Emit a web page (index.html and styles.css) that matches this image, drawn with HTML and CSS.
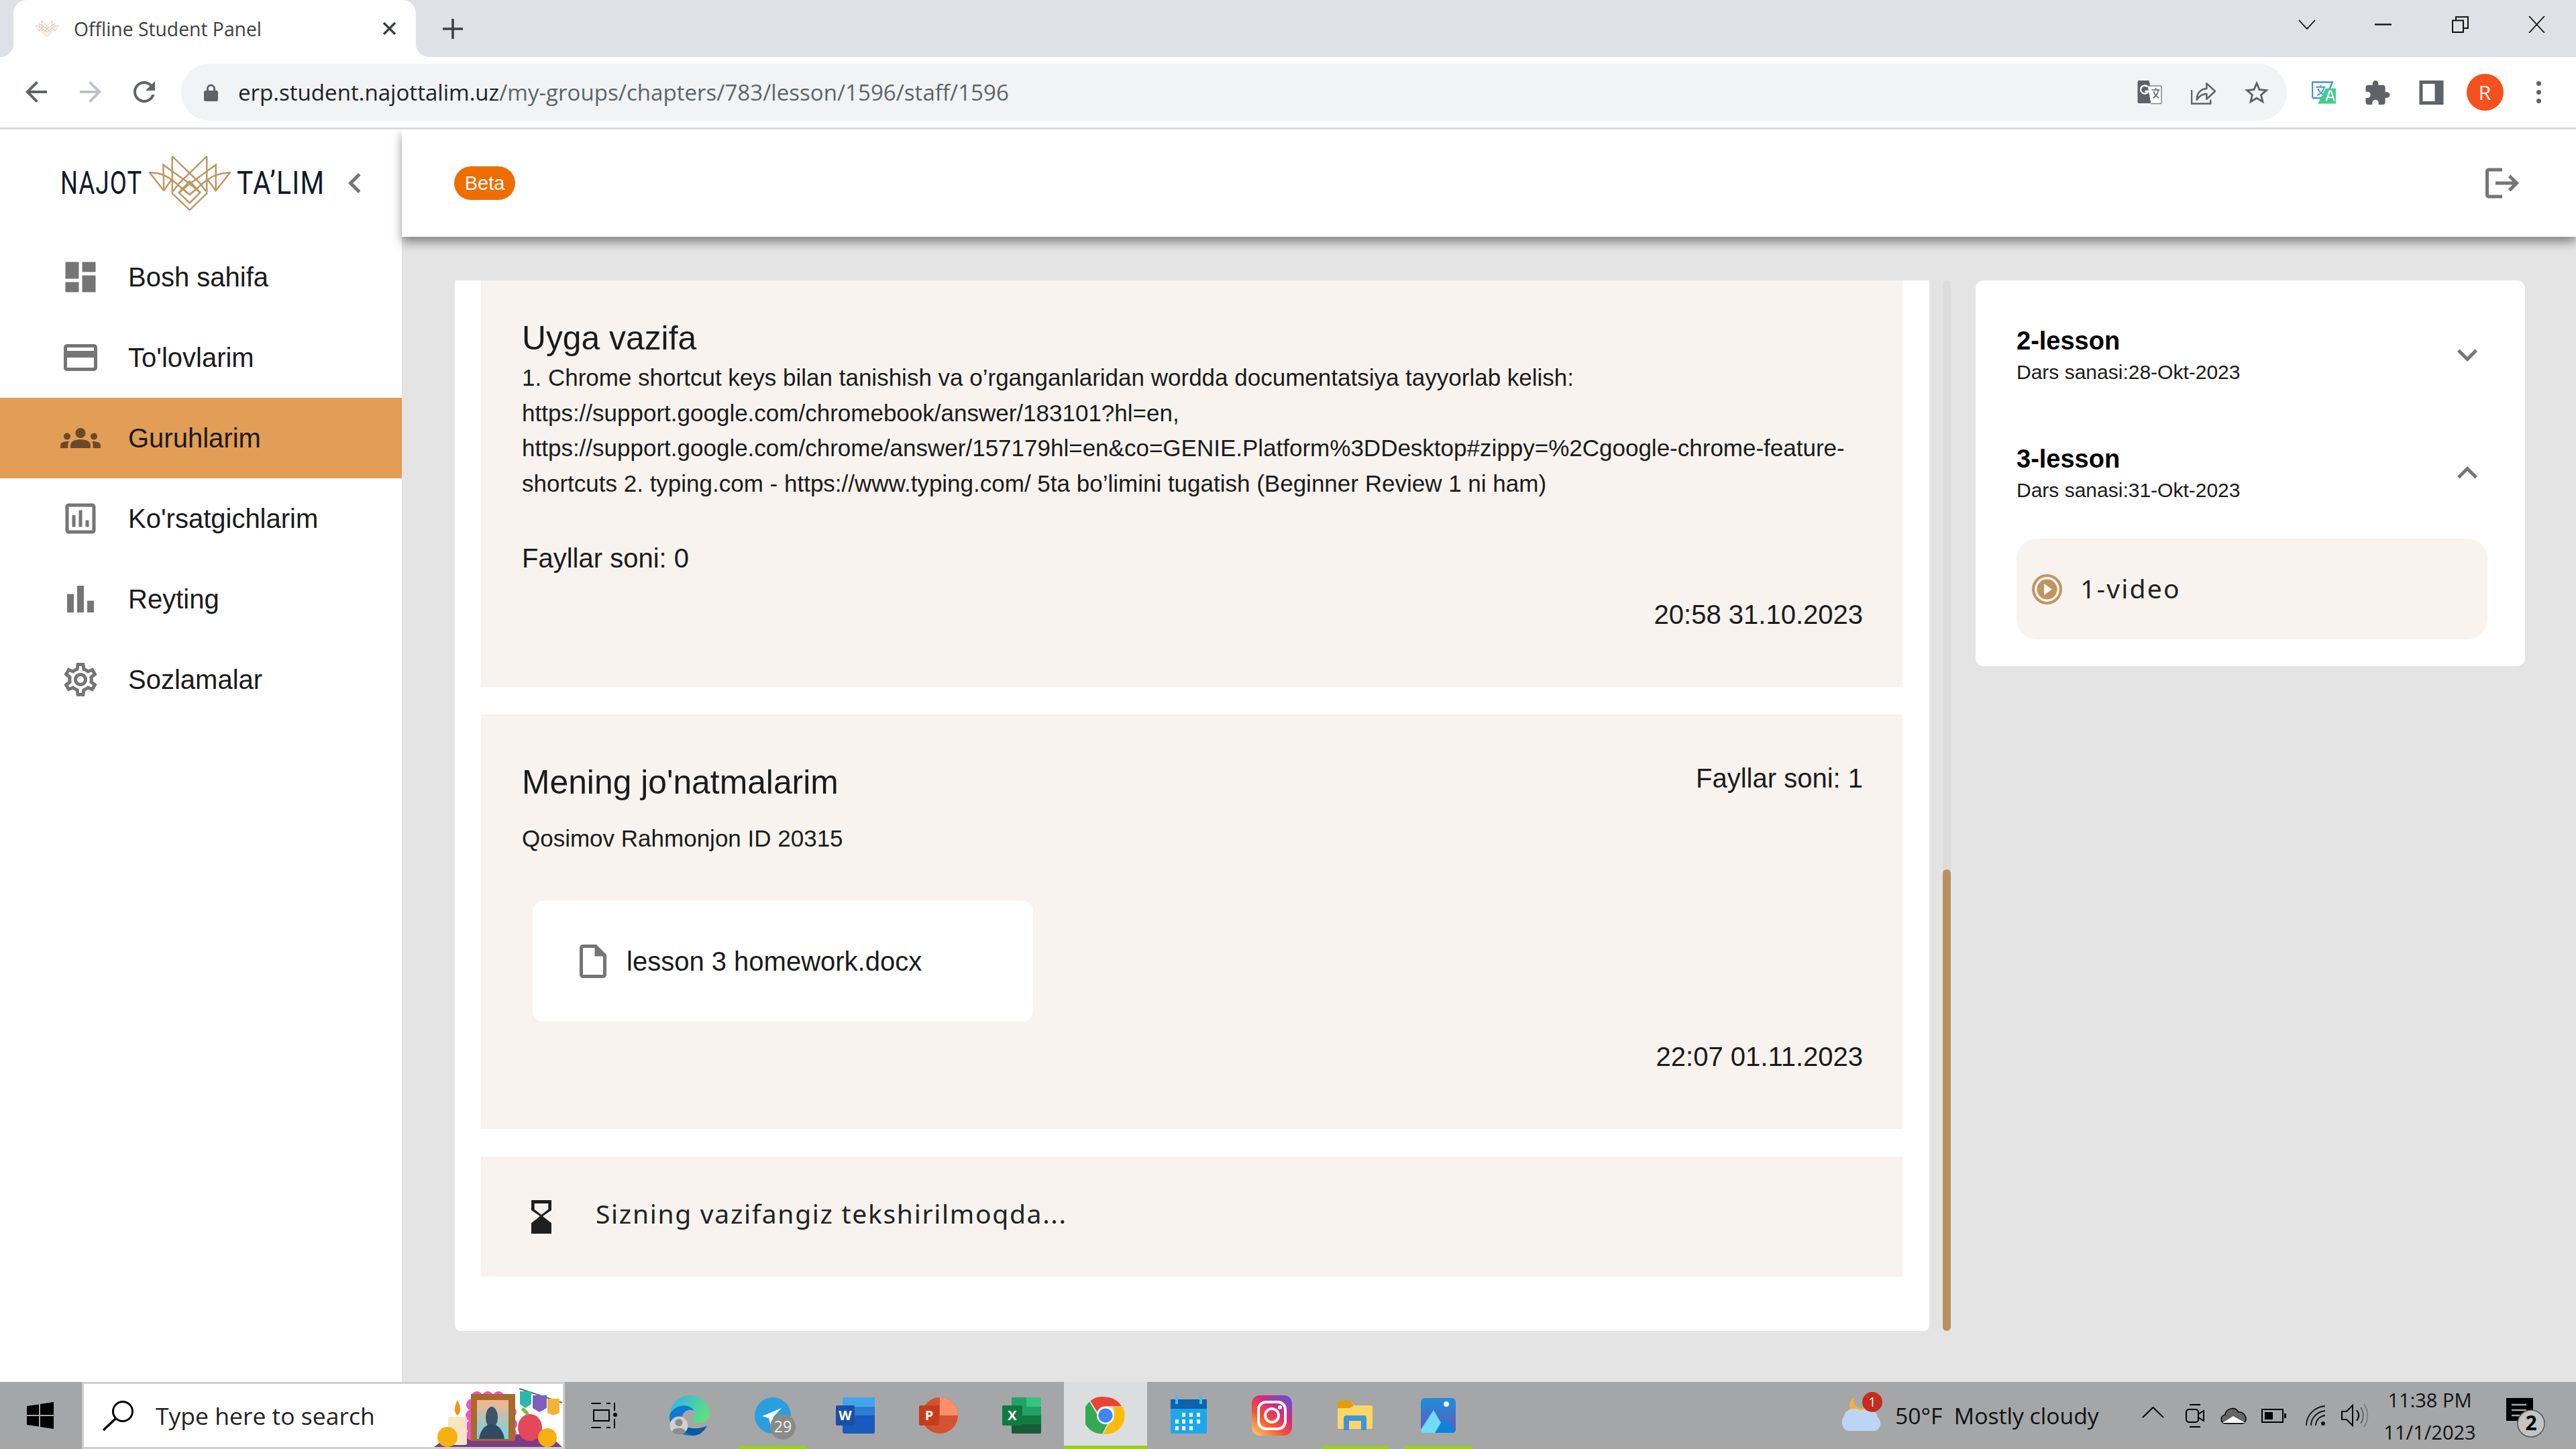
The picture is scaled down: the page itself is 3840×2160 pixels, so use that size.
FILE: index.html
```html
<!DOCTYPE html>
<html lang="uz">
<head>
<meta charset="utf-8">
<title>Offline Student Panel</title>
<link rel="stylesheet" href="styles.css">
</head>
<body>
<svg class="defs" width="0" height="0" aria-hidden="true">
  <symbol id="lotus" viewBox="0 0 122 82">
    <g fill="none" stroke="currentColor" stroke-width="2.4" stroke-linejoin="miter">
      <path d="M34.700 1V56.300L60.700 81L86.300 56.300V1"/>
      <path d="M34.700 1L76.300 41.300L85 53M86.300 1L45 41.300L36 53"/>
      <path d="M22.300 52.300L21.300 13.700L61 42L76.300 55M22.300 52.300M99.700 52.300V13.700L60.700 42L45 55"/>
      <path d="M60.700 38L76.300 55L60.700 70.700L44.700 55Z"/>
      <path d="M48 48L60.700 58L73 48"/>
      <path d="M22.300 52.300L1 25.300C16 25 26 30 34 36C45 44 52 52 60.700 58C69 52 76 44 87 36C95 30 105 26 121 25.300L99.700 52.300L87 35M22.300 52.300L34 35"/>
    </g>
  </symbol>
</svg>

<header class="tabstrip">
  <div class="tab">
    <svg class="tab-favicon"><use href="#lotus"/></svg>
    <span class="tab-title">Offline Student Panel</span>
    <svg class="tab-close" viewBox="0 0 21 19"><path d="M2 1L19 18M19 1L2 18" fill="none" stroke="#3c4043" stroke-width="3.4"/></svg>
  </div>
  <svg class="tab-plus" viewBox="0 0 30 30"><path d="M15 1V29M1 15H29" fill="none" stroke="#3c4043" stroke-width="3.6" stroke-linecap="round"/></svg>
  <div class="win-controls">
    <svg class="win-chev" viewBox="0 0 26 15"><path d="M1 1L13 14L25 1" fill="none" stroke="#111" stroke-width="1.8"/></svg>
    <svg class="win-min" viewBox="0 0 25 3"><path d="M0 1.5H25" stroke="#111" stroke-width="2.4"/></svg>
    <svg class="win-restore" viewBox="0 0 25 25"><path d="M1 6.5H17V24H1ZM6 6V1.2H24V18H17" fill="none" stroke="#111" stroke-width="2"/></svg>
    <svg class="win-close" viewBox="0 0 25 25"><path d="M1 0L24 25M24 0L1 25" fill="none" stroke="#111" stroke-width="1.8"/></svg>
  </div>
</header>

<nav class="toolbar">
  <svg class="nav-icon nav-back" viewBox="0 0 24 24"><path d="M20 11H7.83l5.59-5.59L12 4l-8 8 8 8 1.41-1.41L7.83 13H20v-2z"/></svg>
  <svg class="nav-icon nav-forward" viewBox="0 0 24 24"><path d="M4 11h12.17l-5.59-5.59L12 4l8 8-8 8-1.41-1.41L16.17 13H4v-2z"/></svg>
  <svg class="nav-icon nav-reload" viewBox="0 0 24 24"><path d="M17.65 6.35C16.2 4.9 14.21 4 12 4c-4.42 0-7.99 3.58-7.99 8s3.57 8 7.99 8c3.73 0 6.84-2.55 7.73-6h-2.08c-.82 2.33-3.04 4-5.65 4-3.31 0-6-2.69-6-6s2.69-6 6-6c1.66 0 3.14.69 4.22 1.78L13 11h7V4l-2.35 2.35z"/></svg>
  <div class="omnibox">
    <svg class="lock" viewBox="0 0 21 26"><path d="M4 10V7a6.5 6.5 0 0 1 13 0v3h2a2 2 0 0 1 2 2v12a2 2 0 0 1-2 2H2a2 2 0 0 1-2-2V12a2 2 0 0 1 2-2zm3 0h7V7a3.5 3.5 0 0 0-7 0z" fill="#5f6368"/></svg>
    <span class="url"><span class="url-host">erp.student.najottalim.uz</span>/my-groups/chapters/783/lesson/1596/staff/1596</span>
    <div class="omni-actions">
      <span class="tool-slot"><svg class="ic36" viewBox="0 0 36 36"><path d="M2 0h15l8 34H2a2 2 0 0 1-2-2V2a2 2 0 0 1 2-2z" fill="#5f6368"/><path d="M15 8H34a1.500 1.500 0 0 1 1.500 1.500V33a1.500 1.500 0 0 1-1.500 1.500H20" fill="#fff" stroke="#80868b" stroke-width="1.5"/><path d="M21 14h12M27 11v3M23 26c4-2 7-6 8-12M24 16c1 4 4 8 8 10" fill="none" stroke="#5f6368" stroke-width="1.6"/><path d="M15 9.500a6 6 0 1 0 1 6.500h-5" fill="none" stroke="#fff" stroke-width="2.4"/></svg></span>
      <span class="tool-slot"><svg class="ic36" viewBox="0 0 38 36"><path d="M1 14V35H30V29" fill="none" stroke="#5f6368" stroke-width="2.6"/><path d="M9 29c0-10 6-17 15-17V4l13 12-13 12v-8c-7 0-11 3-15 9z" fill="none" stroke="#5f6368" stroke-width="2.6" stroke-linejoin="round"/></svg></span>
      <span class="tool-slot"><svg class="ic-star" viewBox="2 2 20 19"><path d="M22 9.240l-7.190-.62L12 2 9.190 8.630 2 9.240l5.460 4.730L5.820 21 12 17.270 18.180 21l-1.630-7.030L22 9.240zM12 15.400l-3.760 2.270 1-4.280-3.320-2.880 4.380-.38L12 6.100l1.710 4.040 4.380.38-3.320 2.880 1 4.280L12 15.400z" fill="#5f6368"/></svg></span>
    </div>
  </div>
  <span class="tool-slot tool-first"><svg class="ic36" viewBox="0 0 36 32"><path d="M1 1H30L20 24H3a2 2 0 0 1-2-2z" fill="#fff" stroke="#4a90e2" stroke-width="2.400"/><path d="M6 8H20M13 5v3M8 20c5-2 9-6 10-12M9 10c1 4 5 8 9 9" fill="none" stroke="#4a90e2" stroke-width="1.8"/><path d="M20 10H35V32H9z" fill="#3ecf8e"/><path d="M21 28l5-14h2l5 14M23 23h8" fill="none" stroke="#fff" stroke-width="2.200"/></svg></span>
  <span class="tool-slot"><svg class="ic36" viewBox="2 1 21 21"><path d="M20.500 11H19V7c0-1.100-.9-2-2-2h-4V3.500a2.500 2.500 0 0 0-5 0V5H4c-1.100 0-1.990.9-1.990 2v3.800H3.500c1.490 0 2.700 1.210 2.700 2.700s-1.210 2.700-2.700 2.700H2V20c0 1.100.9 2 2 2h3.800v-1.500c0-1.490 1.210-2.700 2.700-2.700s2.700 1.210 2.700 2.700V22H17c1.100 0 2-.9 2-2v-4h1.500a2.500 2.500 0 0 0 0-5z" fill="#5f6368"/></svg></span>
  <span class="tool-slot"><svg class="ic36" viewBox="0 0 36 36"><path fill-rule="evenodd" d="M0 0H36V36H0ZM5 5V31H23V5Z" fill="#5f6368"/></svg></span>
  <span class="tool-slot"><span class="avatar">R</span></span>
  <span class="tool-slot"><span class="kebab"><i></i><i></i><i></i></span></span>
</nav>

<div class="app">
  <aside class="sidebar">
    <div class="logo-row">
      <span class="word word-left"><span>NAJOT</span></span>
      <svg class="logo-mark"><use href="#lotus"/></svg>
      <span class="word word-right"><span>TA’LIM</span></span>
      <svg class="collapse" viewBox="0 0 24 24"><path d="M15.410 7.410 14 6l-6 6 6 6 1.410-1.410L10.830 12z"/></svg>
    </div>
    <ul class="menu">
      <li class="menu-item"><svg class="menu-icon" viewBox="0 0 24 24"><path d="M3 13h8V3H3v10zm0 8h8v-6H3v6zm10 0h8V11h-8v10zm0-18v6h8V3h-8z"/></svg>Bosh sahifa</li>
      <li class="menu-item"><svg class="menu-icon" viewBox="0 0 24 24"><path d="M20 4H4c-1.110 0-1.990.89-1.990 2L2 18c0 1.110.89 2 2 2h16c1.110 0 2-.89 2-2V6c0-1.110-.89-2-2-2zm0 14H4v-6h16v6zm0-10H4V6h16v2z"/></svg>To'lovlarim</li>
      <li class="menu-item active"><svg class="menu-icon" viewBox="0 0 24 24"><path d="M12 12.750c1.630 0 3.070.39 4.240.9 1.080.48 1.760 1.560 1.760 2.730V18H6v-1.610c0-1.180.68-2.260 1.760-2.730 1.170-.52 2.610-.91 4.240-.91zM4 13c1.100 0 2-.9 2-2s-.9-2-2-2-2 .9-2 2 .9 2 2 2zm1.130 1.100c-.37-.06-.74-.1-1.130-.1-.99 0-1.930.21-2.780.58C.48 14.900 0 15.620 0 16.430V18h4.500v-1.610c0-.83.23-1.610.63-2.290zM20 13c1.100 0 2-.9 2-2s-.9-2-2-2-2 .9-2 2 .9 2 2 2zm4 3.430c0-.81-.48-1.530-1.220-1.850-.85-.37-1.790-.58-2.780-.58-.39 0-.76.04-1.130.1.4.68.63 1.460.63 2.290V18H24v-1.570zM12 6c1.660 0 3 1.340 3 3s-1.340 3-3 3-3-1.340-3-3 1.340-3 3-3z"/></svg>Guruhlarim</li>
      <li class="menu-item"><svg class="menu-icon" viewBox="0 0 24 24"><path d="M19 3H5c-1.100 0-2 .9-2 2v14c0 1.100.9 2 2 2h14c1.100 0 2-.9 2-2V5c0-1.100-.9-2-2-2zm0 16H5V5h14v14zM7 10h2v7H7zm4-3h2v10h-2zm4 6h2v4h-2z"/></svg>Ko'rsatgichlarim</li>
      <li class="menu-item"><svg class="menu-icon" viewBox="0 0 24 24"><path d="M4 9h4v11H4zm12 4h4v7h-4zm-6-9h4v16h-4z"/></svg>Reyting</li>
      <li class="menu-item"><svg class="menu-icon" viewBox="0 0 24 24"><path d="M19.430 12.980c.04-.32.07-.64.07-.98 0-.34-.03-.66-.07-.98l2.110-1.650c.19-.15.24-.42.12-.64l-2-3.460c-.09-.16-.26-.25-.44-.25-.06 0-.12.01-.17.03l-2.490 1c-.52-.4-1.080-.73-1.690-.98l-.38-2.650C14.460 2.180 14.250 2 14 2h-4c-.25 0-.46.18-.49.42l-.38 2.650c-.61.25-1.170.59-1.690.98l-2.490-1c-.06-.02-.12-.03-.18-.03-.17 0-.34.09-.43.25l-2 3.460c-.13.22-.07.49.12.64l2.110 1.650c-.04.32-.07.65-.07.98 0 .33.03.66.07.98l-2.110 1.650c-.19.15-.24.42-.12.64l2 3.460c.09.16.26.25.44.25.06 0 .12-.01.17-.03l2.490-1c.52.4 1.080.73 1.690.98l.38 2.650c.03.24.24.42.49.42h4c.25 0 .46-.18.49-.42l.38-2.650c.61-.25 1.170-.59 1.690-.98l2.490 1c.06.02.12.03.18.03.17 0 .34-.09.43-.25l2-3.460c.12-.22.07-.49-.12-.64l-2.110-1.650zm-1.980-1.710c.04.31.05.52.05.73 0 .21-.02.43-.05.73l-.14 1.130.89.7 1.080.84-.7 1.210-1.270-.51-1.040-.42-.9.68c-.43.32-.84.56-1.250.73l-1.060.43-.16 1.130-.2 1.350h-1.400l-.19-1.350-.16-1.130-1.060-.43c-.43-.18-.83-.41-1.230-.71l-.91-.7-1.060.43-1.270.51-.7-1.210 1.080-.84.89-.7-.14-1.130c-.03-.31-.05-.54-.05-.74s.02-.43.05-.73l.14-1.130-.89-.7-1.080-.84.7-1.210 1.270.51 1.040.42.9-.68c.43-.32.84-.56 1.250-.73l1.060-.43.16-1.130.2-1.350h1.390l.19 1.350.16 1.130 1.060.43c.43.18.83.41 1.230.71l.91.7 1.060-.43 1.270-.51.7 1.210-1.070.85-.89.7.14 1.130zM12 8c-2.210 0-4 1.790-4 4s1.790 4 4 4 4-1.790 4-4-1.790-4-4-4zm0 6c-1.100 0-2-.9-2-2s.9-2 2-2 2 .9 2 2-.9 2-2 2z"/></svg>Sozlamalar</li>
    </ul>
  </aside>

  <main class="main">
    <div class="topbar">
      <span class="beta">Beta</span>
      <svg class="logout" viewBox="0 0 24 24"><path d="M17 7l-1.410 1.410L18.170 11H8v2h10.170l-2.580 2.580L17 17l5-5zM4 5h8V3H4c-1.100 0-2 .9-2 2v14c0 1.100.9 2 2 2h8v-2H4V5z"/></svg>
    </div>
    <div class="content">
      <section class="card">
        <article class="panel panel-task">
          <h2 class="panel-title">Uyga vazifa</h2>
          <p class="task-body">1. Chrome shortcut keys bilan tanishish va o’rganganlaridan wordda documentatsiya tayyorlab kelish:<br>https://support.google.com/chromebook/answer/183101?hl=en,<br>https://support.google.com/chrome/answer/157179hl=en&amp;co=GENIE.Platform%3DDesktop#zippy=%2Cgoogle-chrome-feature-<br>shortcuts 2. typing.com - https://www.typing.com/ 5ta bo’limini tugatish (Beginner Review 1 ni ham)</p>
          <p class="meta meta-files">Fayllar soni: 0</p>
          <p class="meta meta-date">20:58 31.10.2023</p>
        </article>
        <article class="panel panel-sent">
          <div class="sent-head">
            <h2 class="panel-title">Mening jo'natmalarim</h2>
            <span class="meta sent-count">Fayllar soni: 1</span>
          </div>
          <p class="student">Qosimov Rahmonjon ID 20315</p>
          <div class="file-card">
            <svg class="file-icon" viewBox="0 0 24 24"><path d="M14 2H6c-1.100 0-1.990.9-1.990 2L4 20c0 1.100.89 2 1.990 2H18c1.100 0 2-.9 2-2V8l-6-6zM6 20V4h7v5h5v11H6z"/></svg>
            <span class="file-name">lesson 3 homework.docx</span>
          </div>
          <p class="meta sent-date">22:07 01.11.2023</p>
        </article>
        <article class="panel panel-status">
          <svg class="hourglass" viewBox="0 0 30 50"><path fill-rule="evenodd" d="M0 0H30V15L17 24L30 34.300V50H0V34.300L13 24L0 15ZM4.700 5V13.700L15 22L25.300 13.700V5Z" fill="#1f1f1f"/></svg>
          <span class="status-text">Sizning vazifangiz tekshirilmoqda...</span>
        </article>
      </section>
      <div class="scrollbar"><div class="scroll-thumb"></div></div>
      <aside class="lessons">
        <div class="lesson">
          <div>
            <div class="lesson-title">2-lesson</div>
            <div class="lesson-date">Dars sanasi:28-Okt-2023</div>
          </div>
          <svg class="lesson-chev" viewBox="0 0 24 24"><path d="M7.410 8.590 12 13.170l4.590-4.580L18 10l-6 6-6-6z"/></svg>
        </div>
        <div class="lesson lesson-open">
          <div>
            <div class="lesson-title">3-lesson</div>
            <div class="lesson-date">Dars sanasi:31-Okt-2023</div>
          </div>
          <svg class="lesson-chev" viewBox="0 0 24 24"><path d="M12 8l-6 6 1.410 1.410L12 10.830l4.590 4.580L18 14z"/></svg>
        </div>
        <div class="video-row">
          <svg class="play" viewBox="0 0 45 45"><circle cx="22.500" cy="22.500" r="20.500" fill="none" stroke="#c09560" stroke-width="4"/><circle cx="22.500" cy="22.500" r="15" fill="#c09560"/><path d="M18 14L30 22.500L18 31Z" fill="#fff"/></svg>
          <span class="video-text">1-video</span>
        </div>
      </aside>
    </div>
  </main>
</div>

<footer class="taskbar">
  <div class="start"><svg class="win-logo" viewBox="0 0 40 40"><path d="M0 6L18 3.500V19H0ZM20 3L40 0V19H20ZM0 21H18V36.500L0 34ZM20 21H40V40L20 37Z" fill="#000"/></svg></div>
  <div class="search">
    <svg class="glass" viewBox="0 0 49 46"><circle cx="31" cy="17" r="14.500" fill="none" stroke="#000" stroke-width="3"/><path d="M20 28L2 45" stroke="#000" stroke-width="3.400"/></svg>
    <span class="search-text">Type here to search</span>
    <svg class="altar" viewBox="0 0 197 94">
      <path d="M5 94L30 75H175L196 94Z" fill="#7e3b86"/>
      <path d="M132 7L196 28" stroke="#666" stroke-width="2" fill="none"/>
      <path d="M133 11H150V30L141 36L133 30Z" fill="#2bb7ad"/><path d="M152 17H173V36L162 42L152 36Z" fill="#7d5ec0"/><path d="M174 22H192V43L183 47L174 43Z" fill="#f5b335"/>
      <g fill="#ee55c0"><circle cx="69" cy="20" r="9"/><circle cx="85" cy="20" r="9"/><circle cx="101" cy="20" r="9"/><circle cx="116" cy="26" r="9"/><circle cx="62" cy="31" r="9"/><circle cx="119" cy="42" r="9"/><circle cx="61" cy="47" r="9"/><circle cx="120" cy="60" r="9"/><circle cx="61" cy="63" r="9"/><circle cx="120" cy="73" r="8"/><circle cx="61" cy="76" r="8"/></g>
      <rect x="60" y="15" width="66" height="70" fill="#a8692c"/>
      <defs><linearGradient id="frameSky" x1="0" x2="0" y1="0" y2="1"><stop offset="0" stop-color="#f4b58a"/><stop offset="1" stop-color="#6fd5ea"/></linearGradient></defs>
      <rect x="69" y="24" width="47" height="58" fill="url(#frameSky)"/>
      <ellipse cx="91" cy="50" rx="9" ry="16" fill="#3d5366"/><path d="M72 82C74 68 82 60 91 60S108 68 110 82Z" fill="#2f4a63"/>
      <rect x="26" y="49" width="28" height="42" rx="3" fill="#f6e6c2"/><path d="M40 24C45 34 46 42 40 47C34 42 35 34 40 24Z" fill="#f5930f"/>
      <circle cx="25" cy="79" r="15" fill="#f7b012"/>
      <ellipse cx="148" cy="65" rx="18" ry="20" fill="#e5485a"/><path d="M145 46C142 41 140 39 136 37" stroke="#7eb63a" stroke-width="5" fill="none"/>
      <circle cx="174" cy="80" r="14" fill="#f7b012"/>
    </svg>
  </div>
  <div class="apps">
    <span class="app-slot"><svg class="app-taskview" viewBox="0 0 43 38"><path d="M1 1H16M1 37H16M24 1H30M24 37H30M5 11H28V27H5Z" fill="none" stroke="#000" stroke-width="2"/><path d="M36 0V12M36 24V38" stroke="#000" stroke-width="2"/><circle cx="37" cy="18" r="3" fill="#000"/></svg></span>
    <span class="app-slot"><svg class="app-icon" viewBox="0 0 60 60"><defs><linearGradient id="edgeA" x1="0" x2="1" y1="0.2" y2="0.6"><stop offset="0" stop-color="#2fb4ef"/><stop offset="1" stop-color="#5fe07a"/></linearGradient></defs><path d="M0 30C2 10 16 0 30 0C48 0 60 12 60 27C60 36 52 41 44 41C38 41 33 38 34 33C36 31 40 30 37 23C32 14 10 12 0 30Z" fill="url(#edgeA)"/><path d="M0 30C6 14 28 10 37 23C30 20 24 22 20 28C14 38 20 54 36 60C14 62-2 46 0 30Z" fill="#0f7ad1"/><path d="M56 45C50 58 40 60 34 60C24 58 16 50 17 42C24 50 44 52 56 45Z" fill="#0c59a4"/><circle cx="14" cy="45" r="13.500" fill="#d2d0ce"/><circle cx="14" cy="40.500" r="5.500" fill="#8f8d8b"/><path d="M4 54C6 47 22 47 24 54C20 60 8 60 4 54Z" fill="#8f8d8b"/></svg></span>
    <span class="app-slot has-line"><svg class="app-telegram" viewBox="0 0 68 68"><circle cx="30" cy="30" r="27" fill="#2a9fde"/><path d="M43 19L14 31L24 34L27 47L33 37L30 33Z" fill="#fff"/><circle cx="45" cy="47" r="19" fill="#8a8a88"/><text class="badge-text" x="45" y="55">29</text></svg></span>
    <span class="app-slot"><svg class="app-icon" viewBox="0 0 60 54"><rect x="10" width="48" height="54" rx="3" fill="#185abd"/><rect x="10" width="48" height="14" fill="#41a5ee"/><rect x="10" y="14" width="48" height="13" fill="#2b7cd3"/><rect y="12" width="28" height="30" rx="2" fill="#1a4fa8"/><text class="app-letter" x="14" y="34">W</text></svg></span>
    <span class="app-slot"><svg class="app-icon" viewBox="0 0 60 54"><circle cx="31" cy="27" r="27" fill="#d35230"/><path d="M31 0A27 27 0 0 1 58 27H31Z" fill="#ff8f6b"/><rect y="12" width="30" height="30" rx="2" fill="#c43e1c"/><text class="app-letter" x="15" y="34">P</text></svg></span>
    <span class="app-slot"><svg class="app-icon" viewBox="0 0 60 54"><rect x="14" width="44" height="54" rx="2" fill="#185c37"/><rect x="14" width="44" height="27" fill="#21a366"/><rect x="36" width="22" height="14" fill="#33c481"/><rect x="36" y="27" width="22" height="13" fill="#107c41"/><rect x="14" y="27" width="22" height="13" fill="#107c41"/><rect y="12" width="30" height="30" rx="2" fill="#0f7b41"/><text class="app-letter" x="15" y="34">X</text></svg></span>
    <span class="app-slot has-line active-app"><svg class="app-icon" viewBox="0 0 48 48"><path d="M24 2a22 22 0 0 1 19.050 11H24a11 11 0 0 0-10 6.500L6 6.500A22 22 0 0 1 24 2z" fill="#ea4335"/><path d="M5 7.500L14.500 24a11 11 0 0 0 12.500 8.500L20 46A22 22 0 0 1 5 7.500z" fill="#34a853"/><path d="M44 13.500A22 22 0 0 1 21 46L33.500 25a11 11 0 0 0-1-11.500z" fill="#fbbc04"/><circle cx="24" cy="24" r="10.500" fill="#fff"/><circle cx="24" cy="24" r="8.500" fill="#4285f4"/></svg></span>
    <span class="app-slot"><svg class="app-icon" viewBox="0 0 54 60"><rect y="6" width="54" height="51" rx="2" fill="#1ca7ec"/><rect y="6" width="54" height="14" fill="#0f62ac"/><path d="M9 0V13M45 0V13" stroke="#38c6ef" stroke-width="4"/><g fill="#fff"><rect x="17" y="26" width="5" height="6"/><rect x="28" y="26" width="5" height="6"/><rect x="39" y="26" width="5" height="6"/><rect x="7" y="36" width="5" height="6"/><rect x="17" y="36" width="5" height="6"/><rect x="28" y="36" width="5" height="6"/><rect x="39" y="36" width="5" height="6"/><rect x="7" y="46" width="5" height="6"/><rect x="17" y="46" width="5" height="6"/><rect x="28" y="46" width="5" height="6"/></g></svg></span>
    <span class="app-slot"><svg class="app-icon" viewBox="0 0 60 60"><defs><linearGradient id="igA" x1="0.1" x2="0.9" y1="1" y2="0"><stop offset="0" stop-color="#fdc468"/><stop offset=".35" stop-color="#f3552f"/><stop offset=".65" stop-color="#d6287f"/><stop offset="1" stop-color="#5c54d6"/></linearGradient></defs><rect width="60" height="60" rx="12" fill="url(#igA)"/><rect x="10" y="10" width="40" height="40" rx="11" fill="none" stroke="#fff" stroke-width="4"/><circle cx="30" cy="30" r="10" fill="none" stroke="#fff" stroke-width="4"/><circle cx="42" cy="18" r="3" fill="#fff"/></svg></span>
    <span class="app-slot has-line"><svg class="app-folder" viewBox="0 0 52 44"><path d="M0 3a3 3 0 0 1 3-3H19L25 7H49a3 3 0 0 1 3 3V40a2 2 0 0 1-2 2H2a2 2 0 0 1-2-2Z" fill="#ffd566"/><path d="M0 3a3 3 0 0 1 3-3H19L24 7L18 11H0Z" fill="#e09c0a"/><path d="M9 44V26A4 4 0 0 1 13 22H39A4 4 0 0 1 43 26V44H35V30H17V44Z" fill="#3b96dc"/></svg></span>
    <span class="app-slot has-line"><svg class="app-photos" viewBox="0 0 52 52"><defs><linearGradient id="phA" x1="0" x2="0" y1="0" y2="1"><stop offset="0" stop-color="#1c8fdc"/><stop offset="1" stop-color="#6a55b9"/></linearGradient></defs><rect width="52" height="52" rx="6" fill="url(#phA)"/><circle cx="38" cy="9" r="4" fill="#f2f2f2"/><path d="M0 47L19 18L36 47Q36 52 30 52H5Q0 52 0 47Z" fill="#6fdcf8"/><path d="M21 52L34 30L52 47Q52 52 46 52Z" fill="#0d84dc"/></svg></span>
  </div>
  <div class="tray">
    <svg class="weather" viewBox="0 0 61 58"><circle cx="26" cy="20" r="14" fill="#f1b238"/><circle cx="30" cy="12" r="12" fill="#a6a7a9"/><path d="M4 36C6 24 22 22 28 28C38 22 52 26 54 38C62 44 58 58 48 58H12C0 58-2 42 4 36Z" fill="#bdd5f5"/><circle cx="46" cy="15" r="15" fill="#c72c1e"/><text class="weather-num" x="46" y="22">1</text></svg>
    <span class="tray-text weather-text">50°F&nbsp; Mostly cloudy</span>
    <svg class="caret" viewBox="0 0 33 17"><path d="M1 16L16.500 1L32 16" fill="none" stroke="#000" stroke-width="2"/></svg>
    <svg class="meet" viewBox="0 0 28 35"><path d="M6 1H22M6 34H22" stroke="#000" stroke-width="2" fill="none"/><rect x="1" y="8" width="18" height="19" rx="4" fill="none" stroke="#000" stroke-width="2"/><path d="M19 15L27 10V25L19 20" fill="none" stroke="#000" stroke-width="2"/></svg>
    <svg class="cloud" viewBox="0 0 41 26"><path d="M9 25C0 25 0 13 8 12C9 3 22-2 28 8C36 7 41 16 38 22C36 25 34 25 32 25Z" fill="#666" stroke="#000" stroke-width="1.500"/><path d="M4 24L20 14L38 24Z" fill="#fff"/></svg>
    <svg class="battery" viewBox="0 0 37 21"><rect x="1" y="1" width="31" height="19" fill="none" stroke="#000" stroke-width="2"/><rect x="5" y="5" width="12" height="11" fill="#000"/><rect x="34" y="7" width="3" height="7" fill="#000"/></svg>
    <svg class="wifi" viewBox="0 0 30 30"><path d="M1 30C1 14 14 2 29 1M8 30C8 18 18 9 29 8M15 30C15 22 21 16 29 15" fill="none" stroke="#111" stroke-width="1.800"/><circle cx="26" cy="27" r="3" fill="#111"/></svg>
    <svg class="volume" viewBox="0 0 40 36"><path d="M1 12H8L17 3V33L8 24H1Z" fill="none" stroke="#000" stroke-width="2"/><path d="M23 10C27 15 27 21 23 26" fill="none" stroke="#000" stroke-width="2"/><path d="M29 6C34 13 34 23 29 30" fill="none" stroke="#555" stroke-width="1.500"/><path d="M34 1C41 11 41 25 34 35" fill="none" stroke="#777" stroke-width="1.500"/></svg>
    <div class="clock"><span>11:38 PM</span><span>11/1/2023</span></div>
    <svg class="notif" viewBox="0 0 58 60"><path d="M0 0H40V34H0Z" fill="#000"/><path d="M8 10H30M8 18H30M8 26H24" stroke="#a6a7a9" stroke-width="2.500"/><circle cx="37" cy="38" r="20" fill="#c4c4c4" stroke="#555" stroke-width="1.500"/><text class="notif-num" x="37" y="48">2</text></svg>
  </div>
</footer>
</body>
</html>
```
FILE: styles.css
```css
* { box-sizing: border-box; }
html, body { margin: 0; padding: 0; }
body {
  width: 3840px; height: 2160px; overflow: hidden;
  display: flex; flex-direction: column;
  font-family: "Liberation Sans", Arial, sans-serif; color: #1b1b1b; background: #e4e4e4;
}
.defs { position: absolute; }
p, h2, ul { margin: 0; padding: 0; font-weight: 400; }
ul { list-style: none; }

/* tab strip */
.tabstrip { height: 85px; flex: none; display: flex; align-items: flex-start; background: #dee1e6; }
.tab {
  position: relative; margin-left: 20px; width: 600px; height: 85px; background: #fff;
  border-radius: 20px 20px 0 0; display: flex; align-items: center; padding-left: 32px; flex: none;
}
.tab::before, .tab::after { content: ""; position: absolute; bottom: 0; width: 20px; height: 20px; }
.tab::before { left: -20px; background: radial-gradient(circle at 0 0, transparent 20px, #fff 20.500px); }
.tab::after { right: -20px; background: radial-gradient(circle at 100% 0, transparent 20px, #fff 20.500px); }
.tab-favicon { width: 36px; height: 24px; color: #d5b088; flex: none; }
.tab-title { margin-left: 22px; font: 400 28.300px "Open Sans", sans-serif; color: #3c4043; width: 460px; white-space: nowrap; }
.tab-close { width: 21px; height: 19px; flex: none; }
.tab-plus { width: 30px; height: 30px; margin: 28px 0 0 40px; flex: none; }
.win-controls { margin-left: auto; display: flex; position: relative; height: 85px; width: 414px; flex: none; padding-left: 0; align-items: flex-start; }
.win-chev { width: 26px; height: 15px; margin-top: 29px; flex: none; }
.win-min { width: 25px; height: 3px; margin: 35px 0 0 88px; flex: none; }
.win-restore { width: 25px; height: 25px; margin: 24px 0 0 90px; flex: none; }
.win-close { width: 25px; height: 25px; margin: 24px 0 0 89px; flex: none; }

/* toolbar */
.toolbar { height: 108px; flex: none; display: flex; align-items: flex-start; background: #fff; border-bottom: 3px solid #dadce0; padding-top: 10px; }
.nav-icon { width: 48px; height: 48px; margin-top: 18px; flex: none; fill: #5f6368; }
.nav-back { margin-left: 30px; }
.nav-forward { margin-left: 33px; fill: #bdc1c6; }
.nav-reload { margin-left: 32px; }
.omnibox {
  margin-left: 31px; width: 3139px; height: 85px; flex: none; background: #f1f3f4; border-radius: 43px;
  display: flex; align-items: center; padding: 0 5px 0 34px;
}
.lock { width: 21px; height: 26px; flex: none; }
.url { margin-left: 30px; font: 400 33.100px "Open Sans", sans-serif; color: #5f6368; white-space: nowrap; }
.url-host { color: #202124; }
.omni-actions { margin-left: auto; display: flex; }
.tool-slot { width: 80px; height: 85px; display: flex; align-items: center; justify-content: center; flex: none; }
.tool-first { margin-left: 15px; }
.ic36 { width: 37px; height: 36px; }
.ic-star { width: 36px; height: 35px; }
.avatar {
  width: 55px; height: 55px; border-radius: 50%; background: #f4511e; color: #fff;
  display: flex; align-items: center; justify-content: center; font: 400 30px "Open Sans", sans-serif;
}
.kebab { display: flex; flex-direction: column; gap: 6px; }
.kebab i { width: 7px; height: 7px; border-radius: 50%; background: #5f6368; display: block; }

/* app shell */
.app { flex: 1; display: flex; min-height: 0; overflow: hidden; }
.sidebar { width: 599px; flex: none; background: #fff; }
.logo-row { height: 160px; display: flex; align-items: center; padding-left: 90px; }
.word { display: block; height: 48px; flex: none; font: 400 48px/48px Roboto, sans-serif; color: #101a2b; white-space: nowrap; }
.word span { display: inline-block; transform-origin: 0 50%; letter-spacing: 1.500px; }
.word-left { width: 120px; }
.word-left span { transform: scaleX(.76); }
.word-right { width: 128px; margin-left: 9px; }
.word-right span { transform: scaleX(.85); }
.logo-mark { width: 122px; height: 82px; margin-left: 12px; color: #bd955f; flex: none; }
.collapse { width: 60px; height: 60px; margin-left: 18px; fill: #757575; flex: none; }
.menu-item { height: 120px; display: flex; align-items: center; padding-left: 90px; font-size: 40px; color: #1a1a1a; }
.menu-icon { width: 60px; height: 60px; margin-right: 41px; fill: #757575; flex: none; }
.menu-item.active { background: #e29d56; }
.menu-item.active .menu-icon { fill: #6b4a28; }

/* main */
.main { flex: 1; min-width: 0; display: flex; flex-direction: column; background: #e4e4e4; }
.topbar {
  position: relative; height: 160px; flex: none; background: #fff; display: flex; align-items: center;
  padding: 0 80px 0 78px; justify-content: space-between; box-shadow: 0 8px 14px rgba(0,0,0,.42);
}
.beta {
  width: 91px; height: 50px; border-radius: 25px; background: #ef6c00; color: #fff;
  display: flex; align-items: center; justify-content: center; font-size: 29px;
}
.logout { width: 60px; height: 60px; fill: #757575; }
.content { flex: 1; min-height: 0; display: flex; align-items: flex-start; padding: 65px 76px 76px 79px; }

.card { width: 2198px; height: 1566px; flex: none; background: #fff; border-radius: 0 0 8px 8px; padding: 0 40px 0 39px; overflow: hidden; }
.panel { background: #f8f3ef; }
.panel-task { height: 606px; padding: 58px 59px 0 61px; }
.panel-sent { height: 618px; margin-top: 41px; padding: 73px 59px 0 61px; }
.panel-status { height: 179px; margin-top: 41px; display: flex; align-items: center; padding-left: 75px; }
.panel-title { font-size: 49.800px; line-height: 56px; }
.task-body { margin-top: 5px; font-size: 35px; line-height: 52.500px; white-space: nowrap; }
.meta { font-size: 40px; line-height: 52px; }
.meta-files { margin-top: 59px; }
.meta-date { margin-top: 32px; text-align: right; }
.sent-head { display: flex; justify-content: space-between; align-items: flex-start; }
.sent-count { margin-top: -4px; }
.student { margin-top: 30px; font-size: 35px; line-height: 52px; }
.file-card {
  margin: 67px 0 0 16px; width: 746px; height: 180px; background: #fff; border-radius: 16px;
  display: flex; align-items: center; padding-left: 60px;
}
.file-icon { width: 60px; height: 60px; fill: #757575; flex: none; }
.file-name { margin-left: 20px; font-size: 40px; }
.sent-date { margin-top: 26px; text-align: right; }
.hourglass { width: 30px; height: 50px; flex: none; }
.status-text { margin: -10px 0 0 66px; font: 400 39px "Noto Sans", sans-serif; letter-spacing: 1.700px; color: #222; }

.scrollbar { width: 12px; height: 1566px; margin-left: 20px; flex: none; background: #dcdcdc; border-radius: 6px; display: flex; flex-direction: column; justify-content: flex-end; }
.scroll-thumb { height: 688px; background: #b8905f; border-radius: 6px; }

.lessons { width: 819px; height: 575px; margin-left: 37px; flex: none; background: #fff; border-radius: 12px; padding: 66px 56px 0 61px; }
.lesson { display: flex; justify-content: space-between; align-items: center; }
.lesson-open { margin-top: 87px; }
.lesson-title { font-size: 38px; font-weight: 700; line-height: 46px; color: #000; position: relative; top: 1px; }
.lesson-date { margin-top: 7px; font-size: 30px; line-height: 36px; color: #1b1b1b; }
.lesson-chev { width: 60px; height: 60px; fill: #757575; flex: none; }
.video-row { margin-top: 54px; height: 150px; background: #f8f3ef; border-radius: 30px; display: flex; align-items: center; padding-left: 23px; }
.play { width: 45px; height: 45px; flex: none; }
.video-text { margin: -3px 0 0 27px; font: 400 39px "Noto Sans", sans-serif; letter-spacing: 2.200px; color: #222; }

/* taskbar */
.taskbar { height: 100px; flex: none; display: flex; background: #a5a6a8; }
.start { width: 122px; flex: none; display: flex; align-items: center; justify-content: center; }
.win-logo { width: 40px; height: 40px; margin-left: -2px; }
.search {
  width: 720px; flex: none; background: #fff; border: 3px solid #cfcfcf; border-bottom-width: 3px;
  display: flex; align-items: center; padding-left: 27px;
}
.glass { width: 49px; height: 46px; flex: none; }
.search-text { margin-left: 31px; font: 400 35.500px "Open Sans", sans-serif; color: #222; white-space: nowrap; }
.altar { width: 197px; height: 94px; margin-left: auto; align-self: flex-end; flex: none; }
.apps { display: flex; flex: none; }
.app-slot { position: relative; width: 124px; height: 100px; display: flex; align-items: center; justify-content: center; flex: none; }
.has-line::after { content: ""; position: absolute; left: 12px; right: 12px; bottom: 0; height: 5px; background: #9bcb26; }
.active-app { background: #dcddde; }
.active-app::after { left: 0; right: 0; }
.app-taskview { width: 43px; height: 38px; margin-right: 5px; }
.app-icon { width: 60px; height: 60px; }
.app-telegram { width: 68px; height: 68px; margin: 8px 0 0 8px; }
.app-folder { width: 52px; height: 44px; }
.app-photos { width: 52px; height: 52px; }
.badge-text { font: 400 23px "Open Sans", sans-serif; fill: #f2f2f2; text-anchor: middle; }
.app-letter { font: 700 20px "Open Sans", sans-serif; fill: #fff; text-anchor: middle; }
.tray { margin-left: auto; display: flex; align-items: center; flex: none; width: 1101px; }
.weather { width: 61px; height: 58px; margin-left: 6px; margin-top: -12px; flex: none; }
.weather-num { font: 400 20px "Open Sans", sans-serif; fill: #fff; text-anchor: middle; }
.tray-text { color: #111; white-space: nowrap; }
.weather-text { margin-left: 19px; width: 305px; font: 400 33.700px "Open Sans", sans-serif; }
.caret { width: 33px; height: 17px; margin-left: 63px; margin-top: -10px; flex: none; }
.meet { width: 28px; height: 35px; margin-left: 32px; flex: none; }
.cloud { width: 41px; height: 26px; margin-left: 23px; flex: none; }
.battery { width: 37px; height: 21px; margin-left: 21px; flex: none; }
.wifi { width: 30px; height: 30px; margin-left: 29px; flex: none; }
.volume { width: 40px; height: 36px; margin-left: 23px; flex: none; }
.clock { width: 144px; margin-left: 20px; flex: none; display: flex; flex-direction: column; align-items: center; gap: 7px; font: 400 29px/41px "Open Sans", sans-serif; color: #111; white-space: nowrap; }
.notif { width: 58px; height: 60px; margin-left: 42px; margin-top: 8px; flex: none; }
.notif-num { font: 700 30px "Open Sans", sans-serif; fill: #000; text-anchor: middle; }
```
